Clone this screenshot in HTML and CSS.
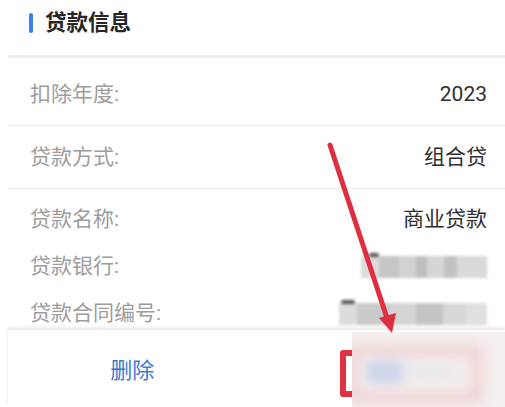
FILE: index.html
```html
<!DOCTYPE html>
<html lang="zh">
<head>
<meta charset="utf-8">
<link rel="stylesheet" href="styles.css">
</head>
<body>
<div class="screen">
  <div class="content">
    <div class="header">
      <span class="header-bar"></span>
      <span class="header-title">贷款信息</span>
    </div>
    <div class="divider-thick"></div>
    <div class="row row-first">
      <span class="label">扣除年度:</span>
      <span class="value">2023</span>
    </div>
    <div class="divider"></div>
    <div class="row row-second">
      <span class="label">贷款方式:</span>
      <span class="value">组合贷</span>
    </div>
    <div class="divider"></div>
    <div class="group">
      <div class="row row-compact">
        <span class="label">贷款名称:</span>
        <span class="value">商业贷款</span>
      </div>
      <div class="row row-compact">
        <span class="label">贷款银行:</span>
        <span class="masked masked-bank"><i class="mark mark-a"></i></span>
      </div>
      <div class="row row-compact">
        <span class="label">贷款合同编号:</span>
        <span class="masked masked-contract"><i class="mark mark-b"></i></span>
      </div>
    </div>
  </div>
  <div class="footer">
    <div class="footer-cell">
      <span class="delete">删除</span>
    </div>
    <div class="footer-cell"></div>
    <div class="highlight"></div>
    <div class="blur-mask">
      <div class="blur-frame"></div>
      <div class="blur-blue"></div>
      <div class="blur-gray"></div>
    </div>
  </div>
  <svg class="arrow" width="505" height="407" viewBox="0 0 505 407">
    <line x1="330" y1="145" x2="387" y2="318" stroke="#dd2f3f" stroke-width="5" stroke-linecap="round"/>
    <polygon points="392,333 379,318 396,313" fill="#dd2f3f"/>
  </svg>
</div>
</body>
</html>
```
FILE: styles.css
```css
* { box-sizing: border-box; }
html, body { margin: 0; padding: 0; background: #fff; }
body {
  font-family: Roboto, "Noto Sans CJK SC", sans-serif;
  width: 505px;
  height: 407px;
  overflow: hidden;
}
.screen {
  position: relative;
  width: 505px;
  height: 407px;
  display: flex;
  flex-direction: column;
}
.content {
  height: 330px;
  overflow: hidden;
  padding-left: 8px;
}
.header {
  height: 46px;
  display: flex;
  align-items: center;
  padding-left: 21px;
  gap: 12px;
}
.header-bar {
  width: 4px;
  height: 20px;
  border-radius: 2px;
  background: #3d7ff0;
}
.header-title {
  font-size: 21.5px;
  font-weight: 700;
  color: #262626;
  line-height: 1;
}
.divider-thick {
  margin-top: 9px;
  height: 3px;
  background: #eeeeee;
}
.divider {
  height: 1px;
  background: #ececec;
}
.row {
  display: flex;
  align-items: center;
  justify-content: space-between;
  padding-left: 22px;
  padding-right: 18px;
  font-size: 21px;
  line-height: 1;
}
.row-first { height: 67px; padding-top: 6px; }
.row-second { height: 62px; }
.group { padding-top: 7px; }
.row-compact { height: 47px; }
.label { color: #9d9d9d; }
.value { color: #2f2f2f; }
.masked {
  position: relative;
  height: 22px;
  filter: blur(1.8px);
}
.masked-bank {
  width: 126px;
  background: linear-gradient(90deg, #dcdcdc 0 14%, #c6c6c6 14% 30%, #d2d2d2 30% 44%, #bebebe 44% 52%, #d6d6d6 52% 66%, #c2c2c2 66% 76%, #d9d9d9 76% 100%);
}
.masked-contract {
  width: 148px;
  background: linear-gradient(90deg, #dcdcdc 0 12%, #cacaca 12% 34%, #d4d4d4 34% 52%, #c4c4c4 52% 70%, #d8d8d8 70% 86%, #e0e0e0 86% 100%);
}
.mark {
  position: absolute;
  top: -3px;
  height: 4px;
  background: #555;
  border-radius: 2px;
}
.mark-a { left: 8px; width: 10px; }
.mark-b { left: 2px; width: 14px; }
.footer {
  position: relative;
  height: 77px;
  margin-left: 8px;
  display: grid;
  grid-template-columns: 1fr 1fr;
  background: #fff;
  box-shadow: 0 -2px 4px rgba(0, 0, 0, 0.10);
}
.footer-cell {
  display: flex;
  align-items: center;
  justify-content: center;
  padding-top: 5px;
}
.delete {
  font-size: 22px;
  color: #3c78d2;
  line-height: 1;
}
.highlight {
  position: absolute;
  left: 332px;
  top: 20px;
  width: 142px;
  height: 47px;
  border: 6px solid #e03342;
  border-radius: 3px;
}
.blur-mask {
  position: absolute;
  left: 344px;
  top: 2px;
  right: 0;
  bottom: 0;
  background: #f5efef;
  overflow: hidden;
}
.blur-frame {
  position: absolute;
  left: -4px;
  top: 14px;
  width: 134px;
  height: 56px;
  border: 10px solid #f1cfd2;
  border-radius: 4px;
  filter: blur(6px);
}
.blur-blue {
  position: absolute;
  left: 12px;
  top: 28px;
  width: 42px;
  height: 24px;
  background: #cdd5ea;
  border-radius: 12px;
  filter: blur(6px);
}
.blur-gray {
  position: absolute;
  left: 56px;
  top: 32px;
  width: 50px;
  height: 18px;
  background: #ebe8ec;
  filter: blur(6px);
}
.arrow {
  position: absolute;
  left: 0;
  top: 0;
  pointer-events: none;
}
```
